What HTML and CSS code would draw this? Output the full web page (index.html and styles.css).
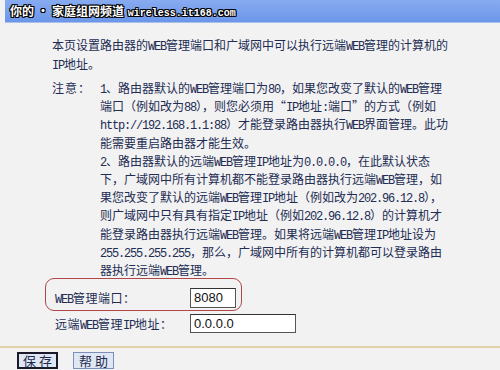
FILE: index.html
```html
<!DOCTYPE html>
<html lang="zh-CN">
<head>
  <meta charset="UTF-8" />
  <title>远端WEB管理</title>
  <link rel="stylesheet" href="styles.css">
</head>
<body>

  <div class="titlebar">
    <span class="mark">你的<span class="dot">•</span>家庭组网频道 <span class="site">wireless.it168.com</span></span>
  </div>

  <div class="panel">
    <p class="intro">本页设置路由器的<span class="en">WEB</span>管理端口和广域网中可以执行远端<span class="en">WEB</span>管理的计算机的<br><span class="en">IP</span>地址。</p>

    <div class="note">
      <div class="note-label">注意：</div>
      <div class="note-body">
        <span class="en">1</span>、路由器默认的<span class="en">WEB</span>管理端口为<span class="en">80</span>，如果您改变了默认的<span class="en">WEB</span>管理<br>
        端口（例如改为<span class="en">88</span>），则您必须用“<span class="en">IP</span>地址<span class="en">:</span>端口”的方式（例如<br>
        <span class="en">http://192.168.1.1:88</span>）才能登录路由器执行<span class="en">WEB</span>界面管理。此功<br>
        能需要重启路由器才能生效。<br>
        <span class="en">2</span>、路由器默认的远端<span class="en">WEB</span>管理<span class="en">IP</span>地址为<span class="en">0.0.0.0</span>，在此默认状态<br>
        下，广域网中所有计算机都不能登录路由器执行远端<span class="en">WEB</span>管理，如<br>
        果您改变了默认的远端<span class="en">WEB</span>管理<span class="en">IP</span>地址（例如改为<span class="en">202.96.12.8</span>），<br>
        则广域网中只有具有指定<span class="en">IP</span>地址（例如<span class="en">202.96.12.8</span>）的计算机才<br>
        能登录路由器执行远端<span class="en">WEB</span>管理。如果将远端<span class="en">WEB</span>管理<span class="en">IP</span>地址设为<br>
        <span class="en">255.255.255.255</span>，那么，广域网中所有的计算机都可以登录路由<br>
        器执行远端<span class="en">WEB</span>管理。
      </div>
    </div>

    <form class="fields">
      <div class="row marked">
        <label><span class="en">WEB</span>管理端口：</label>
        <input type="text" class="port" value="8080" />
      </div>
      <div class="row">
        <label>远端<span class="en">WEB</span>管理<span class="en">IP</span>地址：</label>
        <input type="text" class="ip" value="0.0.0.0" />
      </div>
    </form>
  </div>

  <div class="actions">
    <button type="button" class="btn focused">保 存</button>
    <button type="button" class="btn">帮 助</button>
  </div>

</body>
</html>
```

FILE: styles.css
```css
body {
  margin: 0;
  width: 500px;
  height: 370px;
  overflow: hidden;
  background: #f2f2f2;
  font-family: "Noto Sans CJK SC", "Liberation Sans", sans-serif;
  font-size: 12px;
  color: #222c52;
}

/* latin runs: narrow like the old 宋体 half-width glyphs */
.en {
  font-family: "Liberation Mono", monospace;
  font-size: 12px;
  line-height: 1;
  letter-spacing: -1.2px;
}

.titlebar {
  position: relative;
  height: 22px;
  margin-left: 5px;
  background: linear-gradient(#88abf0, #6b96e9);
  border-bottom: 1px solid #a9c0ea;
}

.mark {
  position: absolute;
  left: 5px;
  top: 2px;
  font-size: 12px;
  line-height: 17px;
  font-weight: bold;
  color: #fff;
  text-shadow: -1px -1px 0 #000, 1px -1px 0 #000, -1px 1px 0 #000, 1px 1px 0 #000, 0 1px 0 #000, 0 -1px 0 #000, 1px 0 0 #000, -1px 0 0 #000;
  white-space: nowrap;
}

.dot {
  margin: 0 3px;
}

.site {
  font-family: "Liberation Mono", monospace;
  font-size: 10px;
  margin-left: 1px;
}

.panel {
  padding: 12px 0 0 52px;
}

.intro {
  margin: 0;
  line-height: 19px;
  white-space: nowrap;
}

.note {
  display: flex;
  margin-top: 6px;
  line-height: 18.2px;
  white-space: nowrap;
}

.note-label {
  width: 48px;
  flex: none;
  letter-spacing: 1px;
}

.fields {
  margin: -1px 0 0 -7px;
}

.row {
  display: flex;
  align-items: center;
  height: 24px;
  padding-left: 10px;
}

.row label {
  width: 135px;
  flex: none;
  letter-spacing: 0.5px;
}

.marked {
  box-sizing: border-box;
  width: 197px;
  height: 33px;
  padding: 6px 0 0 9px;
  border: 1px solid #b04848;
  border-radius: 9px;
}

.row input {
  height: 19px;
  box-sizing: border-box;
  border: 1px solid #555;
  border-top-color: #333;
  background: #fff;
  font-family: "Liberation Sans", sans-serif;
  font-size: 13px;
  color: #111;
  padding: 0 3px;
}

.marked input {
  height: 20px;
}

.port {
  width: 46px;
}

.ip {
  width: 106px;
}

.actions {
  margin-top: 11px;
  border-top: 2px solid #e0d3a6;
  padding: 4px 0 0 17px;
  display: flex;
  gap: 15px;
}

.btn {
  box-sizing: border-box;
  width: 41px;
  height: 17px;
  padding: 0;
  font-family: "Noto Sans CJK SC", sans-serif;
  font-size: 13px;
  line-height: 13px;
  color: #1f2a4d;
  background: #dfe6f4;
  border: 1px solid #7b8fb8;
}

.focused {
  border: 2px solid #1a1a2a;
}
```
